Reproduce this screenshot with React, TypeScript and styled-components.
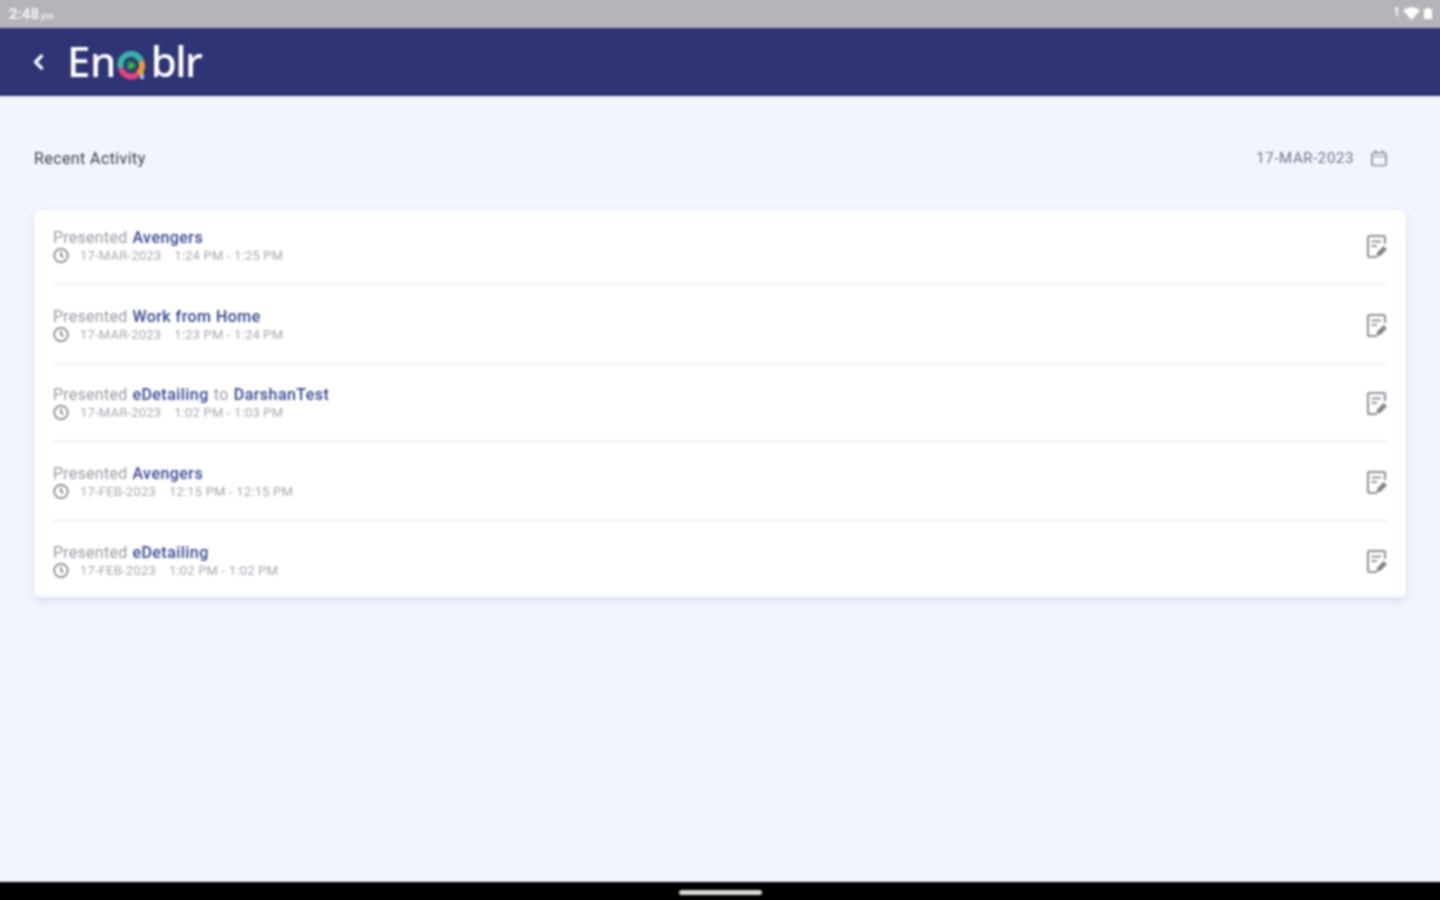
import styled, { createGlobalStyle } from 'styled-components';

const GlobalStyle = createGlobalStyle`
	html, body {
		margin: 0;
		padding: 0;
		overflow: hidden;
		background: #f1f5fe;
	}
	* {
		box-sizing: border-box;
	}
`;

const activities = [
	{ id: 1, parts: [{ text: 'Avengers' }], date: '17-MAR-2023', time: '1:24 PM - 1:25 PM' },
	{ id: 2, parts: [{ text: 'Work from Home' }], date: '17-MAR-2023', time: '1:23 PM - 1:24 PM' },
	{ id: 3, parts: [{ text: 'eDetailing' }, { text: 'to', plain: true }, { text: 'DarshanTest' }], date: '17-MAR-2023', time: '1:02 PM - 1:03 PM' },
	{ id: 4, parts: [{ text: 'Avengers' }], date: '17-FEB-2023', time: '12:15 PM - 12:15 PM' },
	{ id: 5, parts: [{ text: 'eDetailing' }], date: '17-FEB-2023', time: '1:02 PM - 1:02 PM' },
];

// 2px bigger on each side so the blur doesn't fade out at the window edge
const Page = styled.div`
	width: 1444px;
	height: 904px;
	margin: -2px;
	overflow: hidden;
	display: flex;
	flex-direction: column;
	background: #f1f5fe;
	font-family: Roboto, 'Liberation Sans', sans-serif;
	filter: blur(0.8px);
`;

const StatusBar = styled.div`
	height: 30px;
	flex: none;
	display: flex;
	align-items: center;
	justify-content: space-between;
	padding: 2px 10px 0 11px;
	background: #b5b4ba;
	color: #f4f4f6;
`;

const Clock = styled.span`
	font-size: 15px;
	font-weight: 700;
	small {
		font-size: 9px;
		font-weight: 500;
		margin-left: 2px;
	}
`;

const StatusIcons = styled.div`
	display: flex;
	align-items: center;
	gap: 4px;
	margin-bottom: 2px;
`;

const Header = styled.header`
	height: 68px;
	flex: none;
	display: flex;
	align-items: center;
	gap: 23px;
	padding-left: 34px;
	background: #2f3574;
`;

const Logo = styled.div`
	display: flex;
	align-items: center;
	color: #fff;
	font-family: 'Noto Sans', sans-serif;
	font-size: 42px;
	font-weight: 500;
	line-height: 1;
	letter-spacing: -0.5px;
	margin-top: -2px;
`;

const LogoTail = styled.span`
	letter-spacing: -1.5px;
`;

const Content = styled.main`
	flex: 1;
	padding: 0 36px;
`;

const TitleRow = styled.div`
	height: 114px;
	padding: 10px 18px 0 0;
	display: flex;
	align-items: center;
	justify-content: space-between;
`;

const Title = styled.h1`
	margin: 0;
	font-size: 16px;
	font-weight: 400;
	letter-spacing: 0.4px;
	color: #3a3d46;
`;

const DatePicker = styled.div`
	display: flex;
	align-items: center;
	gap: 16px;
	font-size: 15px;
	letter-spacing: 0.6px;
	color: #6c7488;
`;

const Card = styled.section`
	display: flex;
	flex-direction: column;
	background: #fff;
	border-radius: 7px;
	box-shadow: 0 3px 10px rgba(60, 70, 110, 0.14);
`;

const Row = styled.article<{ $last?: boolean }>`
	height: ${({ $last }) => ($last ? '72px' : '75.75px')};
	margin: ${({ $last }) => ($last ? '0 19px' : '0 19px 3px')};
	display: flex;
	align-items: center;
	justify-content: space-between;
	border-bottom: ${({ $last }) => ($last ? 'none' : '3px solid #f4f5f8')};
`;

const RowText = styled.div`
	display: flex;
	flex-direction: column;
`;

const Headline = styled.div`
	display: flex;
	gap: 5px;
	font-size: 16px;
	line-height: 18px;
	letter-spacing: 0.25px;
	color: #989aa0;
`;

const Subject = styled.span<{ $plain?: boolean }>`
	color: ${({ $plain }) => ($plain ? '#989aa0' : '#34468f')};
	font-weight: ${({ $plain }) => ($plain ? 400 : 500)};
	letter-spacing: 0.45px;
`;

const Meta = styled.div`
	display: flex;
	align-items: center;
	font-size: 13px;
	line-height: 17px;
	letter-spacing: 0.2px;
	color: #a5a8ae;
	svg {
		margin-right: 11px;
	}
	span + span {
		margin-left: 13px;
	}
`;

function BackIcon() {
	return (
		<svg width="12" height="20" viewBox="0 0 12 20" fill="none">
			<path d="M9.500 4 3.500 10l6 6" stroke="#fff" strokeWidth="3.200" strokeLinecap="round" strokeLinejoin="round" />
		</svg>
	);
}

function LogoA() {
	return (
		<svg width="30" height="30" viewBox="0 0 30 30" fill="none" style={{ margin: '9px 4px 0 1px' }}>
			<path d="M25 22v6" stroke="#8fc6d6" strokeWidth="4" />
			<path d="M4 17A10.500 10.500 0 0 1 24 10" stroke="#35b3a8" strokeWidth="6" />
			<path d="M24 10a10.500 10.500 0 0 1-3 13" stroke="#f09a36" strokeWidth="6" />
			<path d="M21 23A10.500 10.500 0 0 1 4 17" stroke="#e6407f" strokeWidth="6" />
			<circle cx="14" cy="14.500" r="5" fill="#1f6f5a" />
			<path d="M11.500 10.500 19 14.500l-7.500 4z" fill="#3ebb3a" />
		</svg>
	);
}

function CalendarIcon() {
	return (
		<svg width="18" height="18" viewBox="0 0 18 18" fill="none" stroke="#8d919b" strokeWidth="1.700">
			<rect x="2" y="4" width="14" height="12.500" rx="1.500" />
			<path d="M2 7.500h14" strokeWidth="1" />
			<path d="M5.500 1v4M12.500 1v4" />
		</svg>
	);
}

function ClockIcon() {
	return (
		<svg width="16" height="17" viewBox="0 0 16 17" fill="none" stroke="#777a82" strokeWidth="1.600">
			<circle cx="8" cy="8.500" r="6.800" />
			<path d="M8 4.500v4.200l2.600 1.200" />
		</svg>
	);
}

function NoteIcon() {
	return (
		<svg width="20" height="23" viewBox="0 0 20 23" fill="none">
			<path d="M18 9V2.500A1.500 1.500 0 0 0 16.500 1h-14A1.500 1.500 0 0 0 1 2.500v18A1.500 1.500 0 0 0 2.500 22H10" stroke="#8a8e96" strokeWidth="2" />
			<path d="M4.500 6.500h9.500M4.500 11h5.500" stroke="#93979f" strokeWidth="2.200" />
			<path d="m9.500 21.500.7-4 6.300-6.500 3.500 3.300-6.500 6.500z" fill="#7f838b" />
		</svg>
	);
}

const NavBar = styled.footer`
	height: 20px;
	flex: none;
	display: flex;
	align-items: center;
	justify-content: center;
	background: #000;
`;

const HomeHandle = styled.div`
	width: 83px;
	height: 5px;
	border-radius: 3px;
	background: #d8d8d8;
`;

export default function App() {
	return (
		<Page>
			<GlobalStyle />
			<StatusBar>
				<Clock>
					2:48<small>pm</small>
				</Clock>
				<StatusIcons>
					<svg width="5" height="12" viewBox="0 0 5 12" fill="#f4f4f6">
						<path d="M2 0h2v9H2zM0 3l2-2v3z" />
					</svg>
					<svg width="17" height="13" viewBox="0 0 17 13" fill="#fff">
						<path d="M0 3.500C4.500-1 12.500-1 17 3.500L8.500 13z" />
					</svg>
					<svg width="8" height="11" viewBox="0 0 8 11" fill="#fff">
						<path d="M2.500 0h3v1H8v10H0V1h2.500z" />
					</svg>
				</StatusIcons>
			</StatusBar>
			<Header>
				<BackIcon />
				<Logo>
					En
					<LogoA />
					<LogoTail>blr</LogoTail>
				</Logo>
			</Header>
			<Content>
				<TitleRow>
					<Title>Recent Activity</Title>
					<DatePicker>
						17-MAR-2023
						<CalendarIcon />
					</DatePicker>
				</TitleRow>
				<Card>
					{activities.map(({ id, parts, date, time }, index) => (
						<Row key={id} $last={index === activities.length - 1}>
							<RowText>
								<Headline>
									Presented
									{parts.map(({ text, plain }) => (
										<Subject key={text} $plain={plain}>
											{text}
										</Subject>
									))}
								</Headline>
								<Meta>
									<ClockIcon />
									<span>{date}</span>
									<span>{time}</span>
								</Meta>
							</RowText>
							<NoteIcon />
						</Row>
					))}
				</Card>
			</Content>
			<NavBar>
				<HomeHandle />
			</NavBar>
		</Page>
	);
}
